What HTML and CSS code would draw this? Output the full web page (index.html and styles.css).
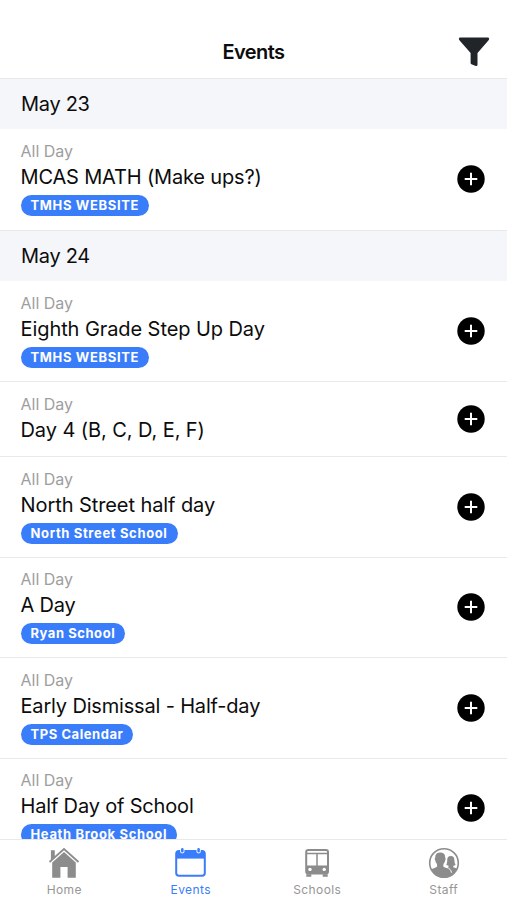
FILE: index.html
```html
<!DOCTYPE html>
<html lang="en">
<head>
<meta charset="utf-8">
<title>Events</title>
<link rel="stylesheet" href="styles.css">
</head>
<body>
<svg class="defs" width="0" height="0">
  <symbol id="plus" viewBox="0 0 28 28"><circle cx="14" cy="14" r="13.7" fill="#000"/><path d="M14 7.7v12.6M7.7 14h12.6" stroke="#fff" stroke-width="2" fill="none"/></symbol>
</svg>
<div class="app">
  <header class="topbar">
    <h1>Events</h1>
    <svg class="filter" viewBox="0 0 32 30"><path d="M1.6.5h28.8q1.4 1.3.4 2.6L19.5 15.9v12.2q-.3 1.3-1.7.9l-4.4-1.7q-.8-.4-.8-1.3V15.9L1.2 3.1Q.2 1.8 1.6.5Z" fill="#212529"/></svg>
  </header>
  <main class="list">
    <h2 class="date">May 23</h2>
    <article class="event first"><div class="info"><p class="time">All Day</p><h3>MCAS MATH (Make ups?)</h3><span class="tag">TMHS WEBSITE</span></div><svg class="add"><use href="#plus"/></svg></article>
    <h2 class="date">May 24</h2>
    <article class="event first"><div class="info"><p class="time">All Day</p><h3 class="loose">Eighth Grade Step Up Day</h3><span class="tag">TMHS WEBSITE</span></div><svg class="add"><use href="#plus"/></svg></article>
    <article class="event short"><div class="info"><p class="time">All Day</p><h3 class="loose">Day 4 (B, C, D, E, F)</h3></div><svg class="add"><use href="#plus"/></svg></article>
    <article class="event"><div class="info"><p class="time">All Day</p><h3 class="loose">North Street half day</h3><span class="tag">North Street School</span></div><svg class="add"><use href="#plus"/></svg></article>
    <article class="event"><div class="info"><p class="time">All Day</p><h3>A Day</h3><span class="tag tight">Ryan School</span></div><svg class="add"><use href="#plus"/></svg></article>
    <article class="event"><div class="info"><p class="time">All Day</p><h3>Early Dismissal - Half-day</h3><span class="tag tight">TPS Calendar</span></div><svg class="add"><use href="#plus"/></svg></article>
    <article class="event"><div class="info"><p class="time">All Day</p><h3>Half Day of School</h3><span class="tag">Heath Brook School</span></div><svg class="add"><use href="#plus"/></svg></article>
  </main>
  <nav class="tabs">
    <a class="tab"><svg viewBox="0 0 32 32" fill="#8c8c8c"><path d="M16 .8 6.8 9V3.2H2.9v9.3L.9 14.2l1.2 1.5L16 3.3l13.9 12.4 1.2-1.5Z"/><path d="M16 5 4.2 15.5v15.2h8.2V20h7.2v10.7h8.2V15.5Z"/></svg><span>Home</span></a>
    <a class="tab active"><svg viewBox="0 0 32 32"><rect x="1.2" y="4" width="28.6" height="24.8" rx="2.8" fill="none" stroke="#3a7dfb" stroke-width="2"/><path d="M1.5 4h28v7.6h-28z" fill="#3a7dfb"/><circle cx="7.3" cy="4.1" r="2.3" fill="#fff"/><circle cx="23.6" cy="4.1" r="2.3" fill="#fff"/><path d="M7.3 2.3v2M23.6 2.3v2" stroke="#3a7dfb" stroke-width="2.6" stroke-linecap="round"/></svg><span>Events</span></a>
    <a class="tab"><svg viewBox="0 0 32 32"><rect x="5.2" y="3" width="21.8" height="23.5" rx="2" fill="none" stroke="#8c8c8c" stroke-width="2"/><path d="M5 6.6h22M16 7v12" stroke="#8c8c8c" stroke-width="1.5"/><path d="M5 18.5h22v7.7H5zM5.3 27.3h5v2.4h-5zM21.7 27.3h5v2.4h-5z" fill="#8c8c8c"/><circle cx="9" cy="22.4" r="1.7" fill="#fff"/><circle cx="23.2" cy="22.4" r="1.7" fill="#fff"/></svg><span>Schools</span></a>
    <a class="tab"><svg viewBox="0 0 32 32"><clipPath id="ring"><circle cx="16" cy="16" r="14"/></clipPath><circle cx="16" cy="16" r="14.3" fill="#fff" stroke="#8c8c8c" stroke-width="1.6"/><g clip-path="url(#ring)" fill="#8c8c8c"><path d="M18.4 31V21.6l1.9-1.2.3-1.7q-1.6-.2-2.3-.9 1-1.7.9-4.6 0-4.1 3.6-4.1t3.6 4.1q0 2.9 1.2 4.5-.8.8-2.3 1v1.5L31 22.5V31Z"/><path d="M1 22.6q6.4-1.5 8.2-3.2l-.3-2.4Q7.4 15.4 7.2 13.2q-.9-1.2 0-2.4Q7 5.5 12.2 5.5t5 5.3q.9 1.2 0 2.4-.2 2.2-1.7 3.8l-.3 2.4q1.3 1.1 4.5 2 3.3 1 3.6 5.3L20 32H1Z"/></g><path d="M18.2 20.3q4.8 1.3 5.3 5.4" fill="none" stroke="#fff" stroke-width="1"/></svg><span>Staff</span></a>
  </nav>
</div>
</body>
</html>
```
FILE: styles.css
```css
* { box-sizing: border-box; }
body { margin: 0; background: #fff; color: #0c0c0c; font-family: Inter, "Liberation Sans", sans-serif; }
h1, h2, h3, p { margin: 0; font-weight: 400; }
.defs { display: block; }
.app { height: 900px; display: flex; flex-direction: column; overflow: hidden; }
.topbar { height: 78px; flex: none; display: grid; grid-template-columns: 1fr auto 1fr; align-items: center; padding: 26px 17px 0 17px; }
.topbar h1 { grid-column: 2; font-size: 20px; line-height: 24px; font-weight: 600; letter-spacing: -0.6px; }
.filter { width: 32px; height: 30px; justify-self: end; }
.list { flex: 1; min-height: 0; overflow: hidden; }
.date { height: 51px; border-top: 1px solid #e6e8ea; background: #f4f6fa; padding: 12px 21px 0; font-size: 20px; line-height: 26px; letter-spacing: -0.3px; }
.event { height: 100.5px; border-top: 1px solid #e9e9eb; display: flex; align-items: center; justify-content: space-between; padding: 0 22px 0 20.5px; }
.event.first { border-top-color: transparent; }
.event.short { height: 75.3px; }
.info { display: flex; flex-direction: column; align-items: flex-start; padding-bottom: 2px; }
.event.short .info { padding-bottom: 1px; }
.time { color: #9e9e9e; font-size: 16px; line-height: 22px; margin: -1px 0 1px; }
.event h3 { font-size: 20px; line-height: 28px; letter-spacing: -0.17px; white-space: nowrap; }
.event h3.loose { letter-spacing: -0.08px; }
.tag { height: 21px; margin-top: 4px; border-radius: 11px; background: #3a7dfb; color: #fff; padding: 0 10px; font-size: 13px; line-height: 20px; font-weight: 700; letter-spacing: 0.65px; white-space: nowrap; }
.tag.tight { letter-spacing: 0.55px; }
.add { width: 28px; height: 28px; flex: none; margin-bottom: 1px; }
.tabs { height: 61px; flex: none; border-top: 1px solid #e9e9eb; background: #fff; display: grid; grid-template-columns: repeat(4, 126.5px); padding-left: 1px; }
.tab { display: flex; flex-direction: column; align-items: center; padding-top: 7px; color: #969696; font-size: 12px; line-height: 16px; letter-spacing: 0.4px; }
.tab svg { width: 32px; height: 32px; }
.tab span { margin-top: 3px; }
.tab.active { color: #3a7dfb; }
```
